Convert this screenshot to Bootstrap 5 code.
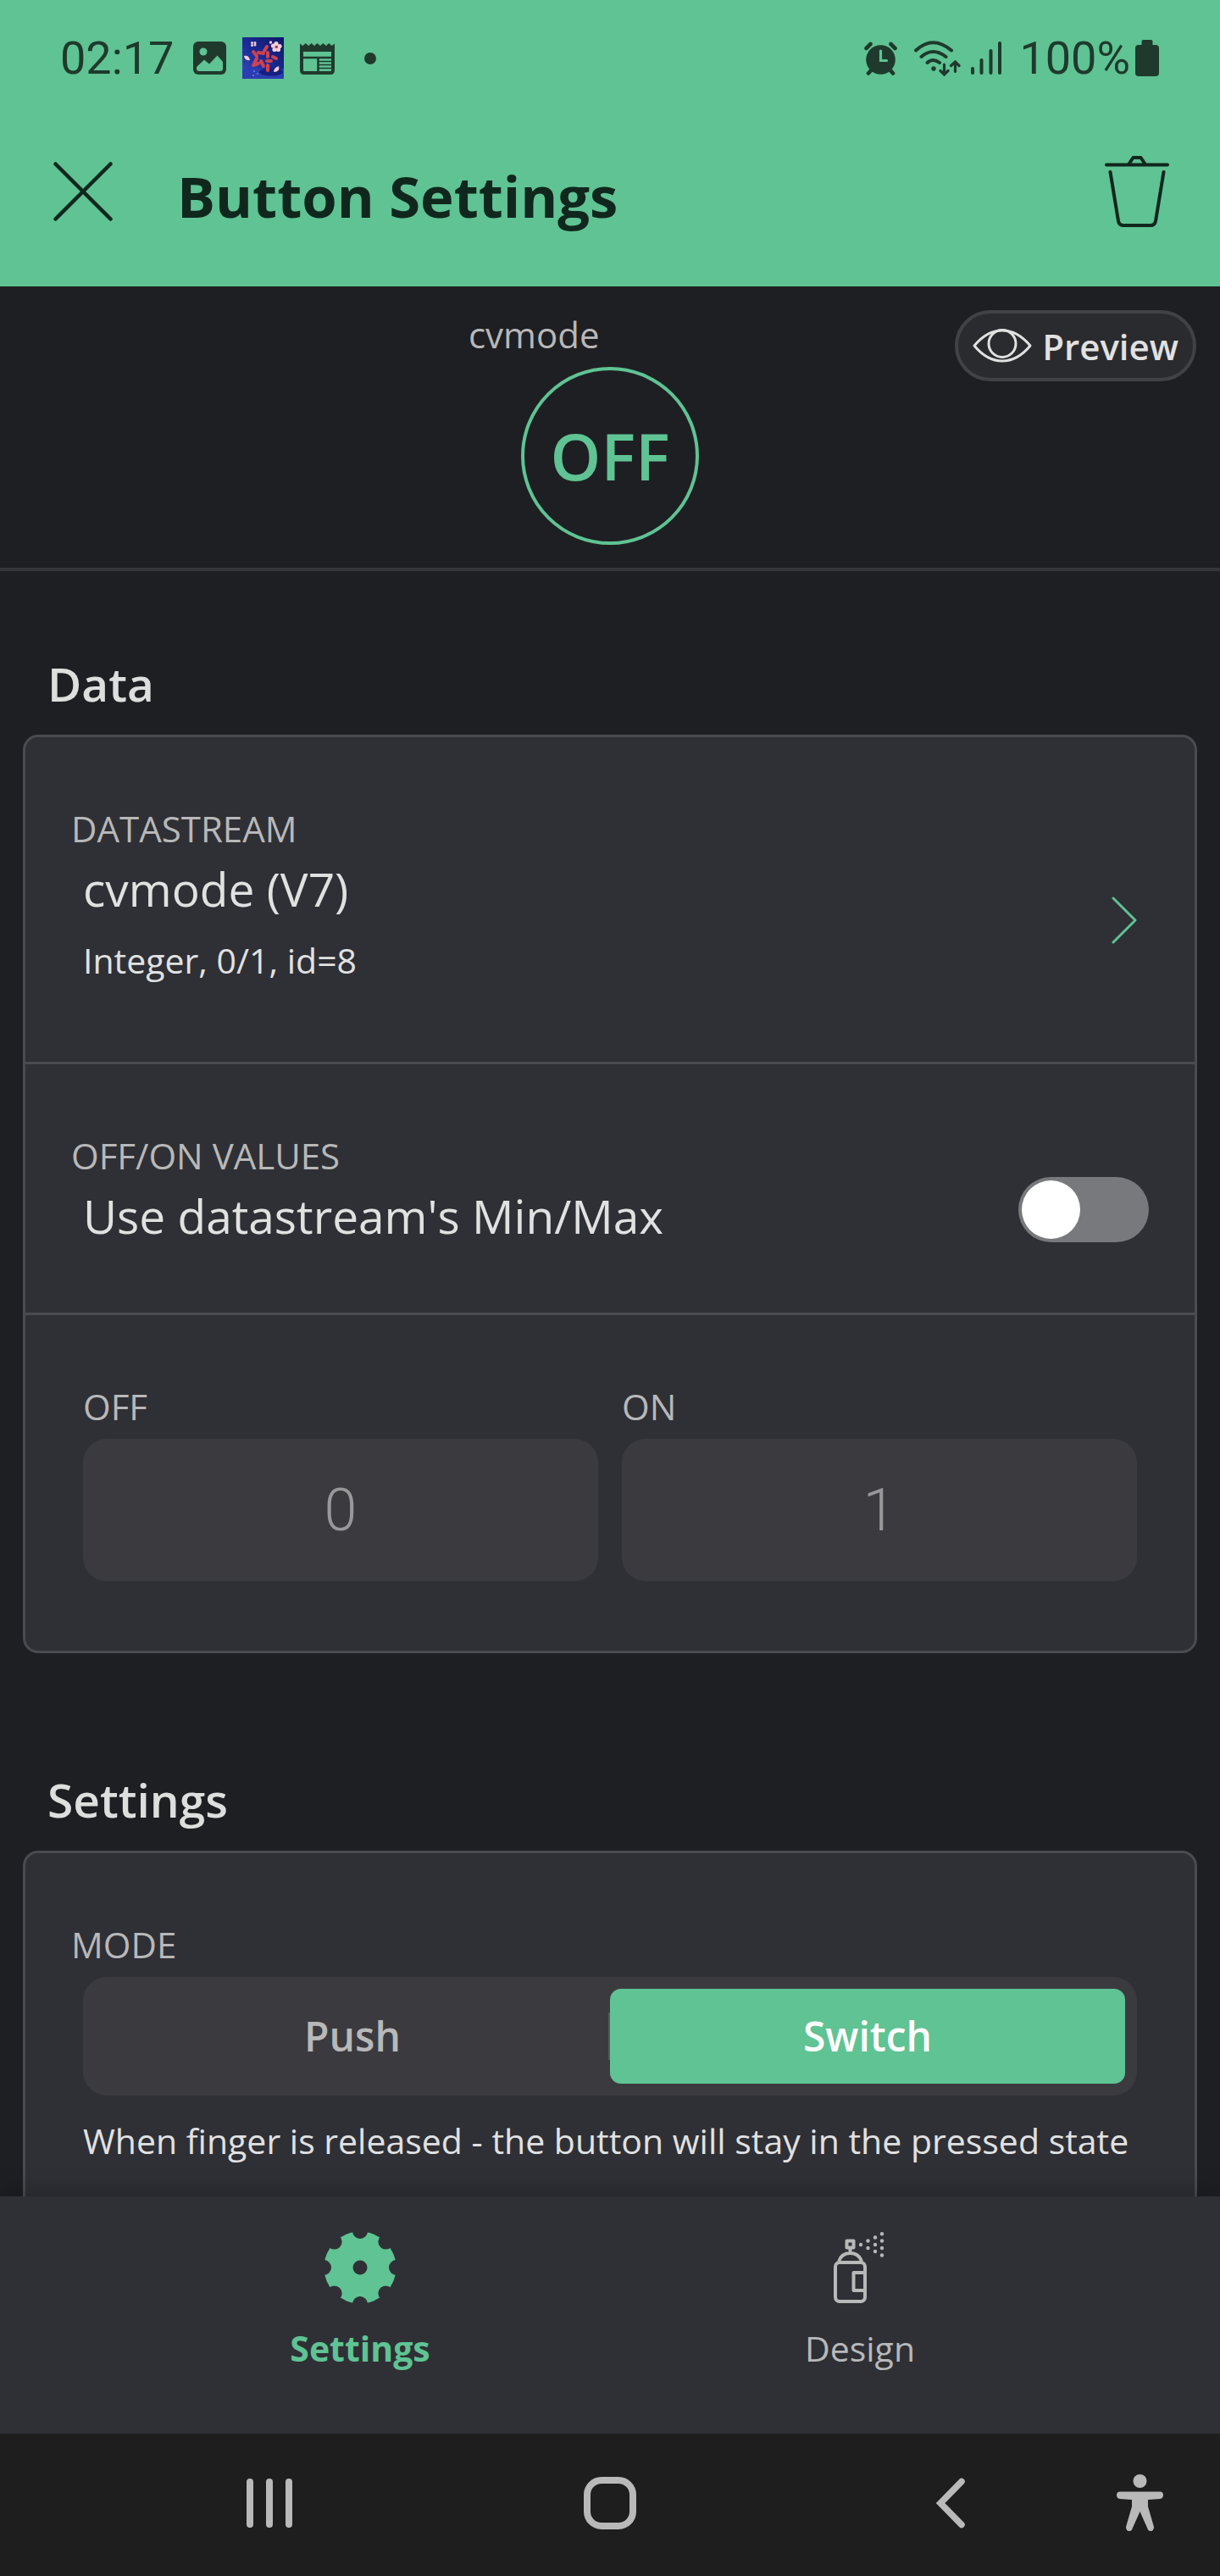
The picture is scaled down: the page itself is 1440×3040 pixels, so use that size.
<!DOCTYPE html>
<html lang="en" data-bs-theme="dark">
<head>
<meta charset="utf-8">
<meta name="viewport" content="width=device-width, initial-scale=1">
<title>Button Settings</title>
<link href="https://cdn.jsdelivr.net/npm/bootstrap@5.3.0/dist/css/bootstrap.min.css" rel="stylesheet">
<style>
  :root {
    --brand: #5fc393;
    --ink: #10271d;
    --ink-soft: #1f3a2c;
    --page: #1e1f23;
    --panel: #2f3035;
    --field: #3b3b3f;
    --line: #4a4b4f;
    --text: #e1e1e1;
    --muted: #b8b8b9;
  }
  body { font-family: "Open Sans", "Noto Sans", sans-serif; background: var(--page); color: var(--text); }
  svg { display: block; flex: none; }
  button { color: inherit; }
  .plain-btn { background: none; border: 0; padding: 0; }

  .top-area { background: var(--brand); color: var(--ink); }
  .status-line { height: 137px; padding: 0 72px 0 71px; font: 400 54px/64px Roboto, sans-serif; color: var(--ink-soft); }
  .status-left { gap: 19px; }
  .battery-text { margin: 0 6px 0 20px; }
  .title-line { padding: 0 60px 23px 63px; height: 201px; gap: 76px; }
  .title-line h1 { font-size: 67px; line-height: 92px; font-weight: 700; padding-top: 10px; color: var(--ink); }

  .widget-area { display: grid; grid-template-columns: 1fr 334px 1fr; padding: 28px 28px 27px; border-bottom: 4px solid #35363a; }
  .widget-name { font-size: 42px; line-height: 57px; color: var(--muted); margin-bottom: 10px; }
  .round-btn { width: 210px; height: 210px; border: 4px solid var(--brand); border-radius: 50%; background: none; color: var(--brand); font-size: 76px; line-height: 104px; font-weight: 600; }
  .preview-btn { height: 84px; border: 4px solid #414246; border-radius: 42px; background: #2a2b2f; padding: 0 17px; gap: 12px; font-size: 42px; line-height: 57px; font-weight: 600; color: var(--text); }

  .group-title { font-size: 55px; line-height: 76px; font-weight: 600; margin: 0 0 22px; padding-left: 29px; color: #dedede; }
  .settings-body { padding: 95px 27px 0; }
  .panel-box { background: var(--panel); border: 3px solid var(--line); border-radius: 18px; }
  .panel-box + .group-title { margin-top: 135px; }
  .panel-row { padding: 79px 54px 77px; }
  .panel-row + .panel-row { border-top: 3px solid var(--line); }
  .panel-row.stream-row { padding-bottom: 91px; }
  .panel-row.values-row { padding-bottom: 82px; }
  .cap-label { display: block; font-size: 42px; line-height: 57px; color: var(--muted); }
  .indent { padding: 0 14px; }
  .row-value { display: block; font-size: 55px; line-height: 75px; margin-top: 5px; }
  .row-note { display: block; font-size: 41px; line-height: 57px; }
  .stream-row .row-note { margin-top: 19px; }
  .value-pair { gap: 28px; }
  .value-field.form-control { height: 168px; margin-top: 10px; border: 0; border-radius: 28px; background: var(--field); color: #98989b; text-align: center; font: 300 70px/84px Roboto, sans-serif; }
  .toggle-box.form-check-input { width: 154px; height: 77px; margin: 0 0 6px; border: 0; border-radius: 39px; background: #78797c; position: relative; float: none; }
  .toggle-box::before { content: ""; display: block; width: 69px; height: 69px; margin: 4px; border-radius: 50%; background: #fff; }
  .segment { margin-top: 10px; padding: 14px; background: var(--field); border-radius: 28px; }
  .segment button { height: 112px; border: 0; border-radius: 13px; background: none; font-size: 48px; line-height: 66px; font-weight: 600; color: var(--muted); }
  .segment button.active { background: var(--brand); color: #fff; }
  .segment-split { width: 2px; height: 56px; margin-left: -2px; background: #56575b; }
  .mode-note { margin-top: 25px; white-space: nowrap; }

  .tab-strip { background: var(--panel); padding: 42px 130px 72px; box-shadow: 0 0 30px rgba(0, 0, 0, .3); z-index: 1; }
  .tab-strip a { gap: 25px; font-size: 41px; line-height: 57px; color: var(--muted); text-decoration: none; }
  .tab-strip a.active { color: var(--brand); font-weight: 700; }
  .system-keys { display: grid; grid-template-columns: 1fr 1fr 1fr 44px; height: 168px; padding: 0 73px 5px 117px; background: #1e1e1f; color: #b9b9b9; z-index: 2; }
</style>
<script src="https://cdn.jsdelivr.net/npm/bootstrap@5.3.0/dist/js/bootstrap.bundle.min.js"></script>
</head>
<body>
<div class="d-flex flex-column vh-100">

  <header class="top-area flex-shrink-0">
    <div class="status-line d-flex justify-content-between align-items-center">
      <div class="status-left d-flex align-items-center">
        <span class="me-1">02:17</span>
        <svg width="39" height="39" viewBox="0 0 39 39"><rect width="39" height="39" rx="6" fill="#1f3a2c"/><circle cx="12" cy="12" r="4.5" fill="#5fc393"/><path d="M4 30 13 21.500l6 5L28.500 16.500 35 24v8q0 3-3 3H7q-3 0-3-3z" fill="#5fc393"/></svg>
        <svg width="49" height="49" viewBox="0 0 49 49">
          <defs><linearGradient id="night" x1="1" y1="0" x2="0" y2="1"><stop offset="0" stop-color="#0d1668"/><stop offset=".55" stop-color="#1c2c96"/><stop offset="1" stop-color="#3a4cc0"/></linearGradient></defs>
          <rect width="49" height="49" fill="url(#night)"/>
          <path d="M0 38q12-4 24 0t25-1v12H0z" fill="#2b3db2"/><ellipse cx="34" cy="41" rx="14" ry="4.500" fill="#15207f"/>
          <g stroke="#cf4250" stroke-width="4" stroke-linecap="round"><path d="M29 11l-3 5M30 18v5M13 17l4 5M19 18l6 1M17 25l-3 6M36 23l4 2M29 28h5M22 28l3 6M13 33l6-2M30 33v6"/></g>
          <g fill="#f6cdd6"><circle cx="40" cy="7.500" r="2.600"/><circle cx="44" cy="10.500" r="2.600"/><circle cx="42.500" cy="14.500" r="2.600"/><circle cx="38" cy="14.500" r="2.600"/><circle cx="36.500" cy="10" r="2.600"/><circle cx="11.500" cy="6.500" r="1.500"/><circle cx="15" cy="6.500" r="1.500"/><circle cx="11.500" cy="9.500" r="1.500"/><circle cx="15" cy="9" r="1.500"/><circle cx="33.500" cy="6" r="1.700"/><path d="M2 22q6-1 7 5-6 1-7-5zM43 34q2 7-6 7 0-5 6-7z"/></g>
          <circle cx="40.500" cy="11.500" r="1.200" fill="#c7384c"/><g fill="#6d86e6"><circle cx="14" cy="40" r="1"/><circle cx="18" cy="43" r="1"/><circle cx="13" cy="45" r="1"/></g>
        </svg>
        <svg width="41" height="38" viewBox="0 0 41 38" fill="none" stroke="#1f3a2c"><path d="M0 1.500 3.400 4 6.800 1 10.200 4 13.600 1 17 4 20.500 1 24 4 27.400 1 30.800 4 34.200 1 37.600 4 41 1.500V11H0z" fill="#1f3a2c" stroke="none"/><path d="M2 10v23q0 3 3 3h31q3 0 3-3V10" stroke-width="4"/><path d="M2 18h37M21.500 18v17" stroke-width="2.500"/><path d="M22 22.500h17M22 26.500h17M22 30.500h17" stroke-width="1.600"/></svg>
        <svg class="ms-3" width="14" height="14" viewBox="0 0 14 14"><circle cx="7" cy="7" r="7" fill="#1f3a2c"/></svg>
      </div>
      <div class="d-flex align-items-center">
        <svg width="39" height="40" viewBox="0 0 39 40" fill="none" stroke="#1f3a2c" stroke-linecap="round"><circle cx="19.500" cy="21.500" r="17.300" fill="#1f3a2c" stroke="none"/><path d="M2.500 8 7.500 3M36.500 8l-5-5M8.500 33.500 5 37.500M30.500 33.500l3.500 4" stroke-width="4.600"/><path d="M19.500 11v11.500h7" stroke="#5fc393" stroke-width="3.200"/></svg>
        <svg class="ms-3 me-2" width="63" height="42" viewBox="-4 0 63 42" fill="none" stroke="#1f3a2c" stroke-width="4" stroke-linecap="round"><path d="M2 11.500Q22-7 44 11.500M8.500 19Q22 7 37.500 19M15.500 26q6.500-6 14.500 0"/><circle cx="23" cy="33" r="2.700" fill="#1f3a2c" stroke="none"/><path d="M35.500 28v11M31 35.500l4.500 4.500 4.500-4.500M48.500 36.500V26M43.500 29.500l5-4.500 4.500 4.500" stroke-width="3.200"/></svg>
        <svg width="37" height="41" viewBox="0 0 37 41" stroke="#1f3a2c" stroke-width="4" stroke-linecap="round"><path d="M2 33v5M12.500 23v15M23.500 12v26M34 3v35"/></svg>
        <span class="battery-text">100%</span>
        <svg width="28" height="43" viewBox="0 0 28 43" fill="#1f3a2c"><rect x="7.500" width="13" height="10" rx="2"/><rect y="6" width="28" height="37" rx="4"/></svg>
      </div>
    </div>
    <div class="title-line d-flex align-items-center">
      <button class="plain-btn" type="button" aria-label="Close"><svg width="70" height="70" viewBox="0 0 70 70" stroke="#10271d" stroke-width="4.500" stroke-linecap="round"><path d="M2.500 2.500l65 65M67.500 2.500l-65 65"/></svg></button>
      <h1 class="m-0 flex-grow-1">Button Settings</h1>
      <button class="plain-btn" type="button" aria-label="Delete"><svg width="76" height="84" viewBox="0 0 76 84" fill="none" stroke="#10271d" stroke-width="4" stroke-linecap="round" stroke-linejoin="round"><path d="M2 10.500h72M28.500 9.500l5-7.500h9l5 7.500M6.500 19l9.500 58q1 5 6 5h32q5 0 6-5l9.500-58"/></svg></button>
    </div>
  </header>

  <main class="flex-grow-1 overflow-hidden">
    <section class="widget-area">
      <div></div>
      <div>
        <div class="widget-name">cvmode</div>
        <div class="text-center"><button class="round-btn p-0 align-top" type="button">OFF</button></div>
      </div>
      <div class="d-flex justify-content-end align-items-start">
        <button class="preview-btn d-flex align-items-center" type="button">
          <svg width="70" height="40" viewBox="0 0 70 40" fill="none" stroke="#e1e1e1" stroke-width="3" stroke-linejoin="round"><path d="M2 20Q17 2 35 2t33 18Q53 38 35 38T2 20z"/><circle cx="35" cy="17.500" r="16"/></svg>
          <span>Preview</span>
        </button>
      </div>
    </section>

    <div class="settings-body">
      <h2 class="group-title">Data</h2>
      <div class="panel-box">
        <div class="panel-row stream-row">
          <span class="cap-label">DATASTREAM</span>
          <div class="indent d-flex justify-content-between align-items-center">
            <div><span class="row-value">cvmode (V7)</span><span class="row-note">Integer, 0/1, id=8</span></div>
            <button class="plain-btn pt-1" type="button" aria-label="Choose datastream"><svg width="30" height="56" viewBox="0 0 30 56" fill="none" stroke="#5fc393" stroke-width="3" stroke-linecap="round" stroke-linejoin="round"><path d="M2 2l26 26L2 54"/></svg></button>
          </div>
        </div>
        <div class="panel-row d-flex justify-content-between">
          <label for="minmax"><span class="cap-label">OFF/ON VALUES</span><span class="row-value indent">Use datastream's Min/Max</span></label>
          <input class="toggle-box form-check-input align-self-end" type="checkbox" role="switch" id="minmax">
        </div>
        <div class="panel-row values-row">
          <div class="value-pair indent d-flex">
            <div class="flex-fill"><label class="cap-label" for="offVal">OFF</label><input class="value-field form-control" id="offVal" type="text" value="0"></div>
            <div class="flex-fill"><label class="cap-label" for="onVal">ON</label><input class="value-field form-control" id="onVal" type="text" value="1"></div>
          </div>
        </div>
      </div>

      <h2 class="group-title">Settings</h2>
      <div class="panel-box">
        <div class="panel-row">
          <span class="cap-label" id="modeLabel">MODE</span>
          <div class="indent">
            <div class="segment d-flex align-items-center" role="group" aria-labelledby="modeLabel">
              <button class="w-50" type="button">Push</button>
              <span class="segment-split"></span>
              <button class="w-50 active" type="button">Switch</button>
            </div>
            <span class="row-note mode-note">When finger is released - the button will stay in the pressed state</span>
          </div>
        </div>
      </div>
    </div>
  </main>

  <nav class="tab-strip d-flex flex-shrink-0 position-relative">
    <a class="active d-flex flex-column align-items-center w-50" href="#settings">
      <svg width="84" height="84" viewBox="0 0 84 84"><defs><mask id="teeth"><circle cx="42" cy="42" r="42.500" fill="#fff"/><circle cx="42" cy="42" r="8.500"/><circle cx="42" cy="-1" r="9"/><circle cx="42" cy="85" r="9"/><circle cx="-1" cy="42" r="9"/><circle cx="85" cy="42" r="9"/><circle cx="11.600" cy="11.600" r="9"/><circle cx="72.400" cy="11.600" r="9"/><circle cx="11.600" cy="72.400" r="9"/><circle cx="72.400" cy="72.400" r="9"/></mask></defs><rect width="84" height="84" fill="#5fc393" mask="url(#teeth)"/></svg>
      <span>Settings</span>
    </a>
    <a class="d-flex flex-column align-items-center w-50" href="#design">
      <svg width="84" height="84" viewBox="0 0 84 84" fill="none" stroke="#b8b8b9" stroke-width="4" stroke-linejoin="round"><rect x="13" y="36" width="35" height="46" rx="5"/><path d="M17 35q3-10 13.500-10T44 35M30.500 25v-7M48 48H34.500v21H48"/><rect x="26.500" y="10.500" width="8" height="8"/><g fill="#b8b8b9" stroke="none"><circle cx="43" cy="15" r="2.200"/><circle cx="51.500" cy="10.500" r="2.200"/><circle cx="51.500" cy="19" r="2.200"/><circle cx="60" cy="6.500" r="2.200"/><circle cx="60" cy="15" r="2.200"/><circle cx="60" cy="23" r="2.200"/><circle cx="68" cy="2.200" r="2.200"/><circle cx="68" cy="10.500" r="2.200"/><circle cx="68" cy="19" r="2.200"/><circle cx="68" cy="27.500" r="2.200"/></g></svg>
      <span>Design</span>
    </a>
  </nav>

  <div class="system-keys flex-shrink-0 position-relative align-items-center">
    <button class="plain-btn d-flex justify-content-center" type="button" aria-label="Recent apps"><svg width="54" height="58" viewBox="0 0 54 58" fill="#b9b9b9"><rect width="8" height="58" rx="4"/><rect x="23" width="8" height="58" rx="4"/><rect x="46" width="8" height="58" rx="4"/></svg></button>
    <button class="plain-btn d-flex justify-content-center" type="button" aria-label="Home"><svg width="62" height="62" viewBox="0 0 62 62" fill="none" stroke="#b9b9b9" stroke-width="8"><rect x="4" y="4" width="54" height="54" rx="17"/></svg></button>
    <button class="plain-btn d-flex justify-content-center" type="button" aria-label="Back"><svg width="36" height="60" viewBox="0 0 36 60" fill="none" stroke="#b9b9b9" stroke-width="7.500" stroke-linecap="round"><path d="M31 4.500 6 30l25 25.500"/></svg></button>
    <button class="plain-btn d-flex justify-content-center" type="button" aria-label="Accessibility"><svg width="55" height="67" viewBox="0 0 55 67" fill="#b9b9b9"><circle cx="27.500" cy="8" r="8"/><path d="M4 20.500h47q4 0 4 4t-4 4.500l-14 1v8l7 24q0 5-4 5-3 0-4-4l-8.500-19L19 63q-1 4-4 4-4 0-4-5l7-24v-8L4 29q-4-.5-4-4.500t4-4z"/></svg></button>
  </div>
</div>
</body>
</html>
